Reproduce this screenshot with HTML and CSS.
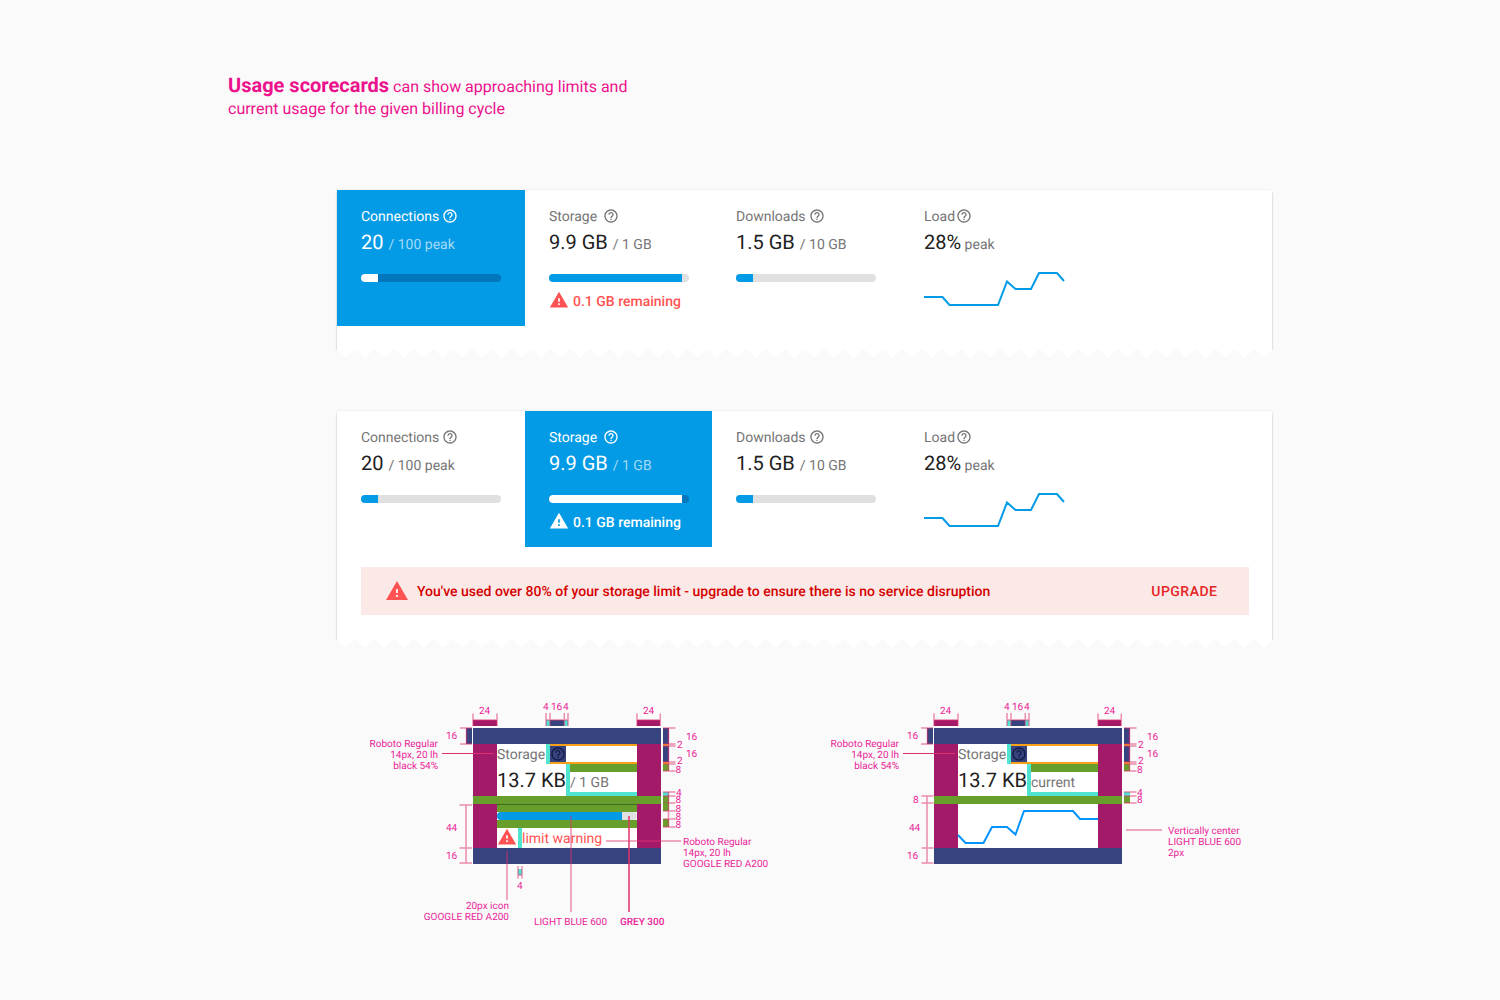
FILE: index.html
```html
<!DOCTYPE html>
<html lang="en">
<head>
<meta charset="utf-8">
<title>Usage scorecards</title>
<link rel="stylesheet" href="styles.css">
</head>
<body>
<svg class="defs" aria-hidden="true">
  <defs>
    <symbol id="help" viewBox="0 0 24 24"><path d="M11 18h2v-2h-2v2zm1-16C6.48 2 2 6.48 2 12s4.480 10 10 10 10-4.480 10-10S17.520 2 12 2zm0 18c-4.410 0-8-3.590-8-8s3.590-8 8-8 8 3.590 8 8-3.590 8-8 8zm0-14c-2.210 0-4 1.790-4 4h2c0-1.100.9-2 2-2s2 .9 2 2c0 2-3 1.750-3 5h2c0-2.250 3-2.500 3-5 0-2.210-1.790-4-4-4z"/></symbol>
    <symbol id="warning" viewBox="0 0 24 24"><path d="M1 21h22L12 2 1 21zm12-3h-2v-2h2v2zm0-4h-2v-4h2v4z"/></symbol>
    <symbol id="trend" viewBox="0 0 142 40"><polyline class="trend-line" points="0,27 18.500,27 25.500,35 74,35 83,11.500 91.500,19 107,19 115,3 133,3 140,11"/></symbol>
    <pattern id="teeth" width="19.550" height="8" patternUnits="userSpaceOnUse"><path fill="#fff" d="M.3 0H16.300L8.300 8z"/></pattern>
    <g id="frame">
      <rect class="white" x="497" y="744" width="140" height="104"/>
      <rect class="navy" x="473" y="728" width="188" height="16"/>
      <rect class="navy" x="473" y="848" width="188" height="16"/>
      <rect class="plum" x="473" y="744" width="24" height="104"/>
      <rect class="plum" x="637" y="744" width="24" height="104"/>
      <rect class="green" x="473" y="796" width="188" height="8"/>
      <path class="orange" d="M550 744h87v2h-87zM550 762h87v2h-87z"/>
      <rect class="navy" x="550" y="746" width="16" height="16"/>
      <rect class="green" x="570" y="764" width="67" height="8"/>
      <path class="teal" d="M546 744h4v20h-4zM566 764h4v28h67v4h-71z"/>
      <use href="#help" x="550" y="746" width="16" height="16" fill="#141a45"/>
      <path class="plum" d="M473 720h24v6h-24zM637 720h23v6h-23z"/>
      <path class="teal" d="M546 720h4v6h-4zM564 720h4v6h-4z"/>
      <rect class="navy" x="550" y="720" width="14" height="6"/>
      <rect class="navy" x="466" y="728" width="6" height="16"/>
      <path class="navy" d="M663 728h6v16h-6zM663 746h6v16h-6z"/>
      <path class="orange" d="M663 744h6v2h-6zM663 762h6v2h-6z"/>
      <rect class="green" x="663" y="764" width="6" height="7"/>
      <rect class="teal" x="663" y="792" width="6" height="4"/>
      <rect class="green" x="663" y="796" width="6" height="7"/>
      <path class="mark" d="M473 720h24M637 720h23M546 720h22M473 713.500v12.500M497 713.500v12.500M637 713.500v12.500M660.300 713.500v12.500M546 713v13M550 713v13M564.300 713v13M568 713v13M466.500 728v16M460 728h12M460 744h12M668.500 728v43M663 728h12.500M663 744h12.500M663 746h12.500M663 762h12.500M663 764h12.500M663 771h12.500M663 792h12.500M663 796h12.500M663 803h12.500"/>
      <path class="leader" d="M442 753.500h52"/>
    </g>
  </defs>
</svg>

<header class="intro"><strong>Usage scorecards</strong> can show approaching limits and<br>current usage for the given billing cycle</header>

<main>
  <section class="panel panel-short">
    <div class="panel-body">
      <div class="cards">
        <div class="card selected">
          <div class="label"><span class="connections">Connections</span><svg class="help"><use href="#help"/></svg></div>
          <div class="value">20 <small>/ 100 peak</small></div>
          <div class="bar"><i style="width:17px"></i></div>
        </div>
        <div class="card">
          <div class="label"><span class="storage">Storage</span><svg class="help"><use href="#help"/></svg></div>
          <div class="value">9.9 GB <small>/ 1 GB</small></div>
          <div class="bar"><i style="width:133px"></i></div>
          <div class="remaining"><svg><use href="#warning"/></svg>0.1 GB remaining</div>
        </div>
        <div class="card">
          <div class="label"><span class="downloads">Downloads</span><svg class="help"><use href="#help"/></svg></div>
          <div class="value">1.5 GB <small>/ 10 GB</small></div>
          <div class="bar"><i style="width:17px"></i></div>
        </div>
        <div class="card">
          <div class="label"><span class="load">Load</span><svg class="help"><use href="#help"/></svg></div>
          <div class="value tight">28% <small>peak</small></div>
          <svg class="trend"><use href="#trend"/></svg>
        </div>
      </div>
    </div>
    <svg class="teeth"><rect width="935" height="8" fill="url(#teeth)"/></svg>
  </section>

  <section class="panel panel-tall">
    <div class="panel-body">
      <div class="cards">
        <div class="card">
          <div class="label"><span class="connections">Connections</span><svg class="help"><use href="#help"/></svg></div>
          <div class="value">20 <small>/ 100 peak</small></div>
          <div class="bar"><i style="width:17px"></i></div>
        </div>
        <div class="card selected">
          <div class="label"><span class="storage">Storage</span><svg class="help"><use href="#help"/></svg></div>
          <div class="value">9.9 GB <small>/ 1 GB</small></div>
          <div class="bar"><i style="width:133px"></i></div>
          <div class="remaining"><svg><use href="#warning"/></svg>0.1 GB remaining</div>
        </div>
        <div class="card">
          <div class="label"><span class="downloads">Downloads</span><svg class="help"><use href="#help"/></svg></div>
          <div class="value">1.5 GB <small>/ 10 GB</small></div>
          <div class="bar"><i style="width:17px"></i></div>
        </div>
        <div class="card">
          <div class="label"><span class="load">Load</span><svg class="help"><use href="#help"/></svg></div>
          <div class="value tight">28% <small>peak</small></div>
          <svg class="trend"><use href="#trend"/></svg>
        </div>
      </div>
      <div class="alert">
        <svg><use href="#warning"/></svg>
        <span class="message">You've used over 80% of your storage limit - upgrade to ensure there is no service disruption</span>
        <span class="upgrade">UPGRADE</span>
      </div>
    </div>
    <svg class="teeth"><rect width="935" height="8" fill="url(#teeth)"/></svg>
  </section>

  <div class="specs">
    <svg class="spec" viewBox="360 695 420 240">
      <use href="#frame"/>
      <rect class="green" x="497" y="804" width="140" height="8"/>
      <rect class="green" x="497" y="820" width="140" height="8"/>
      <rect class="edge" x="497" y="804" width="140" height="1"/>
      <rect x="497" y="812" width="140" height="8" rx="4" fill="#e0e0e0"/>
      <path d="M622 812H501a4 4 0 0 0 0 8h121z" fill="#039be5"/>
      <rect class="teal" x="518" y="828" width="4" height="20"/>
      <use href="#warning" x="497" y="827" width="20" height="20" fill="#ff5252"/>
      <text class="t14" x="497" y="759">Storage</text>
      <text class="t20" x="497" y="787">13.7 KB</text>
      <text class="t14" x="570" y="787">/ 1 GB</text>
      <text class="t14 red" x="522" y="843">limit warning</text>
      <path class="green" d="M663 803h6v8h-6zM663 819h6v8h-6z"/>
      <rect class="teal" x="518" y="869" width="4" height="6"/>
      <path class="mark" d="M668.500 792v35M663 811h12.500M663 819h12.500M663 827h12.500M466 805v58M459.500 805h12.500M459.500 848h12.500M459.500 863h12.500M518 866v12.500M522 866v12.500M518 875h4M507 851v49M571 816v96M606 841h75"/>
      <path class="mark strong" d="M629 816v96"/>
      <g class="note">
        <text x="479" y="714">24</text><text x="643" y="714">24</text>
        <text x="543" y="710">4</text><text x="551" y="710">16</text><text x="563" y="710">4</text>
        <text x="446" y="739">16</text><text x="686" y="740">16</text><text x="686" y="757">16</text>
        <text x="677" y="748">2</text><text x="677" y="764">2</text><text x="675.500" y="773">8</text>
        <text x="676" y="796">4</text><text x="675.500" y="803">8</text><text x="675.500" y="812">8</text><text x="675.500" y="820">8</text><text x="675.500" y="828">8</text>
        <text x="446" y="831">44</text><text x="446" y="859">16</text><text x="517" y="889">4</text>
        <g text-anchor="end"><text x="438" y="747">Roboto Regular</text><text x="438" y="758">14px, 20 lh</text><text x="438" y="769">black 54%</text>
        <text x="509" y="909">20px icon</text><text x="509" y="920">GOOGLE RED A200</text></g>
        <text x="534" y="925">LIGHT BLUE 600</text><text class="medium" x="620" y="925">GREY 300</text>
        <text x="683" y="845">Roboto Regular</text><text x="683" y="856">14px, 20 lh</text><text x="683" y="867">GOOGLE RED A200</text>
      </g>
    </svg>
    <svg class="spec" viewBox="360 695 420 240">
      <use href="#frame"/>
      <polyline class="trend-line bright" points="497,835 504.500,843 522.500,843 531,827 546,827 554.500,834.500 563,811 612,811 619,819 637,819"/>
      <text class="t14" x="497" y="759">Storage</text>
      <text class="t20" x="497" y="787">13.7 KB</text>
      <text class="t14" x="570" y="787">current</text>
      <path class="mark" d="M466 796v67M460.500 796h12M460.500 803h12M460.500 848h12M460.500 863h12M665 830h36"/>
      <g class="note">
        <text x="479" y="714">24</text><text x="643" y="714">24</text>
        <text x="543" y="710">4</text><text x="551" y="710">16</text><text x="563" y="710">4</text>
        <text x="446" y="739">16</text><text x="686" y="740">16</text><text x="686" y="757">16</text>
        <text x="677" y="748">2</text><text x="677" y="764">2</text><text x="676" y="773">8</text>
        <text x="676" y="796">4</text><text x="676" y="803">8</text>
        <text x="452" y="803">8</text><text x="448" y="831">44</text><text x="446" y="859">16</text>
        <g text-anchor="end"><text x="438" y="747">Roboto Regular</text><text x="438" y="758">14px, 20 lh</text><text x="438" y="769">black 54%</text></g>
        <text x="707" y="834">Vertically center</text><text x="707" y="845">LIGHT BLUE 600</text><text x="707" y="856">2px</text>
      </g>
    </svg>
  </div>
</main>
</body>
</html>
```
FILE: styles.css
```css
* { box-sizing: border-box; }
body {
  margin: 0;
  width: 1500px;
  height: 1000px;
  overflow: hidden;
  background: #fafafa;
  font-family: Roboto, "Liberation Sans", sans-serif;
  color: #212121;
  text-rendering: geometricPrecision;
}
svg { display: block; flex: none; }
.defs { width: 0; height: 0; }

.intro {
  height: 190px;
  padding: 74px 0 0 228px;
  font-size: 16px;
  line-height: 22px;
  color: #ec118c;
}
.intro strong { font-size: 20px; }

.panel { width: 935px; margin-left: 337px; }
.panel-body {
  background: #fff;
  border-radius: 2px 2px 0 0;
  box-shadow: 0 0 2px rgba(0, 0, 0, .12), 0 2px 2px rgba(0, 0, 0, .24);
  clip-path: inset(-3px -3px 0 -3px);
}
.panel-short .panel-body { height: 160px; }
.panel-tall .panel-body { height: 229px; }
.panel-tall { margin-top: 53px; }
.teeth { width: 935px; height: 8px; }

.cards { display: grid; grid-template-columns: 188px 187px 188px 188px; }
.card { height: 136px; padding: 16px 0 0 24px; color: #212121; }
.label {
  display: flex;
  align-items: center;
  height: 20px;
  font-size: 14px;
  color: #757575;
  fill: #757575;
}
.label span { padding-top: 2px; }
.connections { width: 81px; }
.storage { width: 54px; }
.downloads { width: 73px; }
.load { width: 32px; }
.help { width: 16px; height: 16px; }
.value {
  height: 32px;
  line-height: 32px;
  font-size: 20px;
  white-space: nowrap;
}
.value small { font-size: 14px; color: #757575; }
.tight { word-spacing: -1.5px; }
.bar {
  width: 140px;
  height: 8px;
  margin-top: 16px;
  border-radius: 4px;
  background: #e0e0e0;
  overflow: hidden;
}
.bar i { display: block; height: 8px; background: #039be5; }
.remaining {
  display: flex;
  align-items: center;
  gap: 4px;
  height: 20px;
  margin-top: 9px;
  padding-top: 2px;
  font-size: 14px;
  font-weight: 500;
  color: #ff5252;
  fill: #ff5252;
}
.remaining svg { width: 20px; height: 20px; margin-top: -4px; }
.trend { width: 142px; height: 40px; margin-top: 12px; }
.trend-line { fill: none; stroke: #039be5; stroke-width: 2; }
.bright { stroke: #0593fc; }

.selected { background: #039be5; color: #fff; }
.selected .label { color: #fff; fill: #fff; }
.selected .value small { color: #a5daf6; }
.selected .bar { background: #0277bd; }
.selected .bar i { background: #fff; }
.selected .remaining { color: #fff; fill: #fff; }

.alert {
  display: flex;
  align-items: center;
  width: 888px;
  height: 48px;
  margin: 20px 0 0 24px;
  padding: 0 31.5px 0 24px;
  background: #fbe9e7;
  font-size: 14px;
  font-weight: 500;
}
.alert svg { width: 24px; height: 24px; fill: #ff5252; }
.alert span { padding-top: 2px; }
.message { margin-left: 8px; color: #d50000; }
.upgrade { margin-left: auto; color: #e52525; letter-spacing: .5px; }

.specs { display: flex; gap: 41px; padding: 47px 0 0 360px; }
.spec { width: 420px; height: 240px; }
.white { fill: #fff; }
.navy { fill: #37437f; }
.plum { fill: #a31a68; }
.green { fill: #689f2c; }
.teal { fill: #4fe3d0; }
.orange { fill: #f9a01b; }
.edge { fill: #3f6b20; }
.mark { fill: none; stroke: #e0316f; stroke-width: 1.5; stroke-opacity: .55; }
.strong { stroke-width: 2; stroke-opacity: .75; }
.leader { stroke: #e0316f; stroke-width: 1; }
.t14 { font-size: 14px; fill: #757575; }
.t20 { font-size: 20px; fill: #212121; }
.red { fill: #ff5252; }
.note { font-size: 10px; fill: #e91e98; }
.medium { font-weight: 500; }
```
